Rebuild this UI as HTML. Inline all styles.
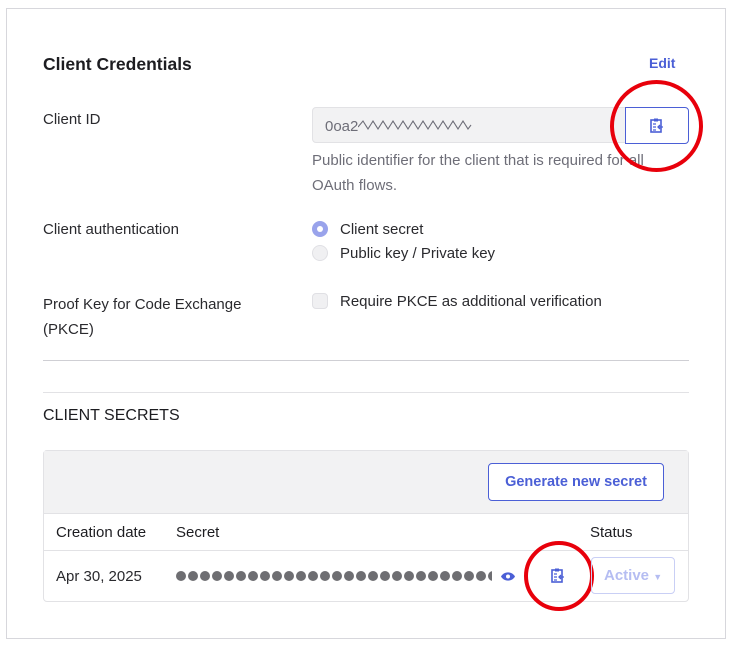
<!DOCTYPE html><html><head><style>
body{margin:0;width:731px;height:655px;background:#fff;font-family:"Liberation Sans",sans-serif;color:#1d1d21;position:relative;overflow:hidden}
.a{position:absolute;white-space:nowrap}
.l{font-size:15px;color:#2a2a2e}
.g{color:#6e6e78;font-size:15px}
.circ{position:absolute;border:4px solid #e8000b;border-radius:50%;box-sizing:border-box}
.d{display:inline-block;width:10px;height:10px;border-radius:50%;background:#6e6e72;margin-right:2px}
</style></head><body>
<div class="a" style="left:6px;top:8px;width:718px;height:629px;border:1px solid #d7d7dc"></div>
<div class="a" style="left:43px;top:54px;font-size:17.5px;font-weight:bold;color:#1d1d21">Client Credentials</div>
<div class="a" style="left:649px;top:55px;font-size:14px;font-weight:bold;color:#4b5fd6">Edit</div>
<div class="a l" style="left:43px;top:111px">Client ID</div>
<div class="a" style="left:312px;top:107px;width:320px;height:36px;background:#f2f2f3;border:1px solid #e2e2e5;border-radius:4px 0 0 4px;box-sizing:border-box"></div>
<div class="a g" style="left:325px;top:118px">0oa2</div>
<svg class="a" style="left:358px;top:118px" width="114" height="14" viewBox="0 0 114 14"><path d="M0 9 L5 3 L10 11 L15 3 L20 11 L25 3 L30 11 L35 3 L40 11 L45 3 L50 11 L55 3 L60 11 L65 3 L70 11 L75 3 L80 11 L85 3 L90 11 L95 3 L100 11 L105 3 L110 11 L113 7" fill="none" stroke="#6e6e78" stroke-width="1.1"/></svg>
<div class="a" style="left:625px;top:107px;width:64px;height:37px;border:1px solid #4b5fd6;border-radius:0 4px 4px 0;box-sizing:border-box;background:#fff"></div>
<svg class="a" style="left:650px;top:118px" width="14" height="15" viewBox="0 0 14 15"><rect x="1" y="2" width="10" height="12" fill="none" stroke="#4b5fd6" stroke-width="1.6"/><rect x="4" y="0.5" width="4" height="3" fill="#4b5fd6"/><path d="M3 6h3M3 9h3M3 12h3M13 9H8m2-2-2 2 2 2" stroke="#4b5fd6" stroke-width="1.3" fill="none"/></svg>
<div class="a g" style="left:312px;top:148px;line-height:25px;white-space:normal;width:352px">Public identifier for the client that is required for all OAuth flows.</div>
<div class="circ" style="left:610px;top:80px;width:93px;height:92px"></div>
<div class="a l" style="left:43px;top:221px">Client authentication</div>
<div class="a" style="left:312px;top:221px;width:16px;height:16px;border-radius:50%;background:#99a3eb"></div>
<div class="a" style="left:317px;top:226px;width:6px;height:6px;border-radius:50%;background:#fff"></div>
<div class="a l" style="left:340px;top:221px">Client secret</div>
<div class="a" style="left:312px;top:245px;width:16px;height:16px;border-radius:50%;background:#f0f0f2;border:1px solid #e0e0e4;box-sizing:border-box"></div>
<div class="a l" style="left:340px;top:245px">Public key / Private key</div>
<div class="a l" style="left:43px;top:292px;line-height:25px">Proof Key for Code Exchange<br>(PKCE)</div>
<div class="a" style="left:312px;top:293px;width:16px;height:16px;border-radius:4px;background:#f0f0f2;border:1px solid #e0e0e4;box-sizing:border-box"></div>
<div class="a l" style="left:340px;top:293px">Require PKCE as additional verification</div>
<div class="a" style="left:43px;top:360px;width:646px;border-top:1px solid #cfcfd4"></div>
<div class="a" style="left:43px;top:392px;width:646px;border-top:1px solid #e2e2e5"></div>
<div class="a" style="left:43px;top:407px;font-size:16px;color:#1d1d21">CLIENT SECRETS</div>
<div class="a" style="left:43px;top:450px;width:646px;height:152px;border:1px solid #e2e2e5;border-radius:4px;box-sizing:border-box"></div>
<div class="a" style="left:44px;top:451px;width:644px;height:62px;background:#f2f2f3;border-bottom:1px solid #e2e2e5"></div>
<div class="a" style="left:488px;top:463px;width:176px;height:38px;border:1px solid #4b5fd6;border-radius:4px;background:#fff;box-sizing:border-box;text-align:center;line-height:36px;font-size:14.5px;font-weight:bold;color:#4b5fd6">Generate new secret</div>
<div class="a l" style="left:56px;top:524px;color:#1d1d21">Creation date</div>
<div class="a l" style="left:176px;top:524px;color:#1d1d21">Secret</div>
<div class="a l" style="left:590px;top:524px;color:#1d1d21">Status</div>
<div class="a" style="left:44px;top:550px;width:644px;border-top:1px solid #e2e2e5"></div>
<div class="a l" style="left:56px;top:568px">Apr 30, 2025</div>
<div class="a" style="left:176px;top:571px;width:316px;height:11px;overflow:hidden;line-height:0"><span class="d"></span><span class="d"></span><span class="d"></span><span class="d"></span><span class="d"></span><span class="d"></span><span class="d"></span><span class="d"></span><span class="d"></span><span class="d"></span><span class="d"></span><span class="d"></span><span class="d"></span><span class="d"></span><span class="d"></span><span class="d"></span><span class="d"></span><span class="d"></span><span class="d"></span><span class="d"></span><span class="d"></span><span class="d"></span><span class="d"></span><span class="d"></span><span class="d"></span><span class="d"></span><span class="d"></span><span class="d"></span></div>
<svg class="a" style="left:501px;top:572px" width="14" height="9" viewBox="0 0 14 9"><path d="M0 4.5C3-1 11-1 14 4.5 11 10 3 10 0 4.5z" fill="#4b5fd6"/><circle cx="7" cy="4.5" r="2" fill="#fff"/></svg>
<svg class="a" style="left:551px;top:568px" width="14" height="15" viewBox="0 0 14 15"><rect x="1" y="2" width="10" height="12" fill="none" stroke="#4b5fd6" stroke-width="1.6"/><rect x="4" y="0.5" width="4" height="3" fill="#4b5fd6"/><path d="M3 6h3M3 9h3M3 12h3M13 9H8m2-2-2 2 2 2" stroke="#4b5fd6" stroke-width="1.3" fill="none"/></svg>
<div class="circ" style="left:524px;top:541px;width:70px;height:70px"></div>
<div class="a" style="left:591px;top:557px;width:84px;height:37px;border:1px solid #c9cff5;border-radius:4px;box-sizing:border-box;font-size:15px;font-weight:bold;color:#b5bdf2;line-height:36px;padding-left:12px">Active <span style="font-size:9px">▼</span></div>
</body></html>
